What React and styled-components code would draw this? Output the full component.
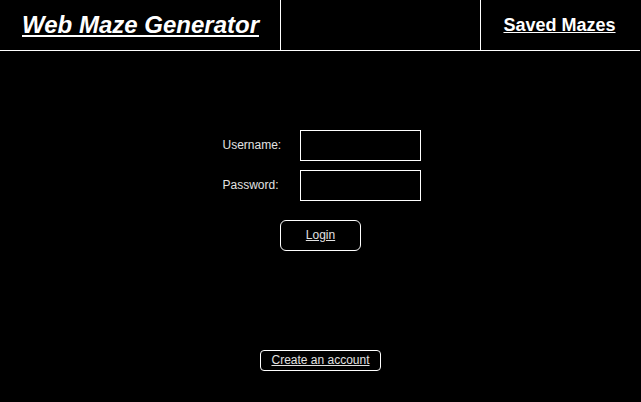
import React from "react";
import styled, { createGlobalStyle } from "styled-components";

const Global = createGlobalStyle`
  html, body {
    margin: 0;
    padding: 0;
    background: #000;
    font-family: "Liberation Sans", Arial, sans-serif;
    color: #fff;
  }
  #root { min-height: 402px; background: #000; }
`;

const Header = styled.header`
  display: grid;
  grid-template-columns: 281px 200px 1fr;
  height: 50px;
  border-bottom: 1px solid #fff;
  margin-right: 1px;
`;

const HeaderCell = styled.div`
  display: flex;
  align-items: center;
  justify-content: center;
  border-right: ${(p) => (p.$last ? "none" : "1px solid #fff")};
`;

const Title = styled.a`
  font-size: 24px;
  font-weight: bold;
  font-style: italic;
  color: #fff;
  text-decoration: underline;
  margin-left: 1px;
`;

const NavLink = styled.a`
  font-size: 18px;
  font-weight: bold;
  color: #fff;
  text-decoration: underline;
  margin-right: 2px;
`;

const Main = styled.main`
  display: flex;
  flex-direction: column;
  align-items: center;
  padding-top: 79px;
`;

const Form = styled.form`
  display: grid;
  grid-template-columns: 78px 121px;
  row-gap: 9px;
  margin-left: 1px;
`;

const Label = styled.label`
  font-size: 12px;
  color: #e2e2e2;
  display: flex;
  align-items: center;
  padding: 0 0 2px 1px;
`;

const Input = styled.input`
  box-sizing: border-box;
  width: 121px;
  height: 31px;
  background: #000;
  border: 1px solid #fff;
  color: #fff;
  outline: none;
  padding: 2px 4px;
  font-family: inherit;
`;

const Button = styled.button`
  box-sizing: border-box;
  width: ${(p) => p.$w}px;
  height: ${(p) => p.$h}px;
  margin-top: ${(p) => p.$mt}px;
  background: #000;
  border: 1px solid #fff;
  border-radius: ${(p) => p.$r}px;
  color: #e2e2e2;
  font-family: "Liberation Sans", Arial, sans-serif;
  font-size: 12px;
  text-decoration: underline;
  padding: 0 0 2px;
  cursor: pointer;
`;

export default function App() {
  return (
    <>
      <Global />
      <Header>
        <HeaderCell>
          <Title>Web Maze Generator</Title>
        </HeaderCell>
        <HeaderCell />
        <HeaderCell $last>
          <NavLink>Saved Mazes</NavLink>
        </HeaderCell>
      </Header>
      <Main>
        <Form onSubmit={(e) => e.preventDefault()}>
          <Label>Username:</Label>
          <Input type="text" />
          <Label>Password:</Label>
          <Input type="password" />
        </Form>
        <Button $w={81} $h={31} $mt={19} $r={6}>Login</Button>
        <Button $w={121} $h={21} $mt={99} $r={4}>Create an account</Button>
      </Main>
    </>
  );
}
